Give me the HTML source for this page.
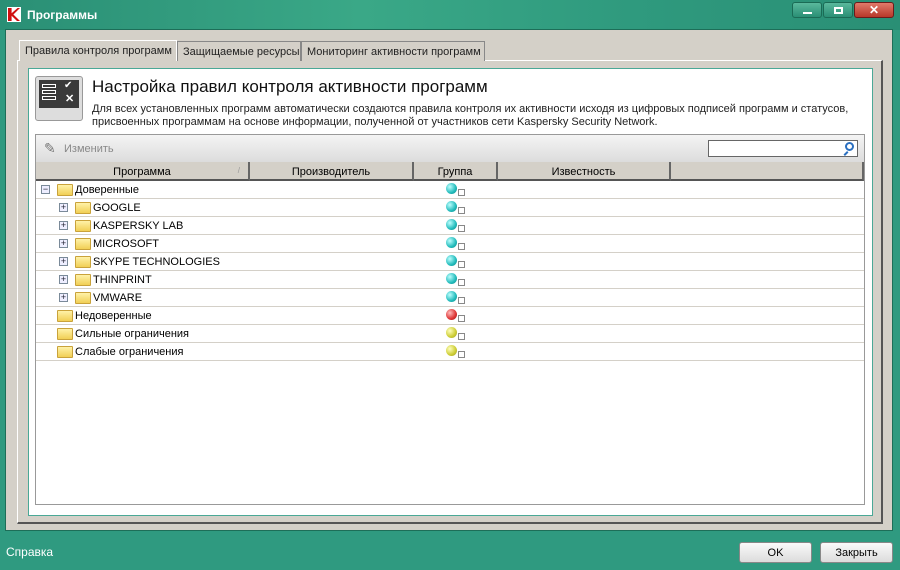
<html><head><style>
*{margin:0;padding:0;box-sizing:border-box}
body{width:900px;height:570px;overflow:hidden;background:#2f9a80;font-family:"Liberation Sans",sans-serif;font-size:11px;color:#000;position:relative}
.abs{position:absolute}
.title{left:0;top:0;width:900px;height:30px;background:linear-gradient(90deg,#2a8f75,#3aa887 40%,#2f9a7e 70%,#2a8f75)}
.client{left:5px;top:29px;width:888px;height:502px;background:#d4d0c8;border:1px solid #1d6e58}
.tab{top:41px;height:20px;border:1px solid #888;border-bottom:none;background:#d4d0c8;font-size:11px;padding:4px 5px 0;white-space:nowrap;color:#222}
.panel{left:17px;top:60px;width:866px;height:464px;border:1px solid #fff;border-right:2px solid #555;border-bottom:2px solid #555;background:#d4d0c8}
.inner{left:28px;top:68px;width:845px;height:448px;border:1px solid #4aa896;background:#fff}
.grid{left:35px;top:134px;width:830px;height:371px;border:1px solid #999;background:#fff}
.hd{position:absolute;top:162px;height:19px;background:#d4d0c8;border-right:2px solid #666;border-bottom:2px solid #555;text-align:center;padding-top:4px;font-size:11px}
.row{position:absolute;left:36px;width:828px;height:18px;border-bottom:1px solid #d4d0c8;font-size:11px}
.row span{position:absolute;top:3px}
.box{position:absolute;top:4px;width:9px;height:9px;border:1px solid #7a8a99;background:#eef;font-size:9px;line-height:7px;text-align:center;color:#223}
.fold{position:absolute;top:3px;width:16px;height:12px;background:linear-gradient(#fff2a8,#f1cf55);border:1px solid #c9a23a;border-radius:1px}
.ball{position:absolute;left:446px;top:2px;width:11px;height:11px;border-radius:50%}
.mini{position:absolute;left:458px;top:8px;width:7px;height:7px;border:1px solid #888;background:#fff}
.btn{top:542px;height:21px;border:1px solid #888;border-radius:3px;background:linear-gradient(#fafafa,#dcdcdc);text-align:center;padding-top:4px;font-size:11px}
</style></head><body>
<div class="abs title"></div>
<div class="abs" style="left:7px;top:7px;width:14px;height:15px;background:#fff"><div style="position:absolute;left:1px;top:1px;width:12px;height:13px;background:#d01010;clip-path:polygon(0 0,30% 0,30% 40%,80% 0,100% 0,45% 50%,100% 100%,75% 100%,30% 60%,30% 100%,0 100%)"></div></div>
<div class="abs" style="left:27px;top:8px;color:#fff;font-weight:bold;font-size:12px">Программы</div>
<div class="abs" style="left:792px;top:2px;width:30px;height:16px;border:1px solid #1b6b55;border-radius:3px;background:linear-gradient(#5ab89c,#2a8f75)"><div style="position:absolute;left:10px;top:9px;width:9px;height:2px;background:#fff"></div></div>
<div class="abs" style="left:823px;top:2px;width:30px;height:16px;border:1px solid #1b6b55;border-radius:3px;background:linear-gradient(#5ab89c,#2a8f75)"><div style="position:absolute;left:10px;top:4px;width:9px;height:7px;border:2px solid #fff"></div></div>
<div class="abs" style="left:854px;top:2px;width:40px;height:16px;border:1px solid #6b1b1b;border-radius:3px;background:linear-gradient(#e07a6a,#b8382a);color:#fff;font-weight:bold;text-align:center;font-size:12px;line-height:14px">✕</div>
<div class="abs client"></div>
<div class="abs panel"></div>
<div class="abs tab" style="left:19px;top:40px;height:21px;width:158px;background:#d4d0c8;border-color:#fff">Правила контроля программ</div>
<div class="abs tab" style="left:177px;width:124px">Защищаемые ресурсы</div>
<div class="abs tab" style="left:301px;width:184px">Мониторинг активности программ</div>
<div class="abs inner"></div>
<div class="abs" style="left:35px;top:76px;width:48px;height:45px;border:1px solid #999;border-radius:3px;background:#ddd"><div style="position:absolute;left:3px;top:3px;width:40px;height:28px;background:#3a3a3a"></div><div style="position:absolute;left:6px;top:7px;width:14px;height:4px;border:1px solid #fff"></div><div style="position:absolute;left:6px;top:13px;width:14px;height:4px;border:1px solid #fff"></div><div style="position:absolute;left:6px;top:19px;width:14px;height:4px;border:1px solid #fff"></div><div style="position:absolute;left:28px;top:3px;color:#fff;font-size:10px">✔</div><div style="position:absolute;left:29px;top:15px;color:#fff;font-size:11px;font-weight:bold">✕</div></div>
<div class="abs" style="left:92px;top:77px;font-size:17px;color:#111">Настройка правил контроля активности программ</div>
<div class="abs" style="left:92px;top:103px;font-size:11px;line-height:13px;color:#222">Для всех установленных программ автоматически создаются правила контроля их активности исходя из цифровых подписей программ и статусов,<br>присвоенных программам на основе информации, полученной от участников сети Kaspersky Security Network.</div>
<div class="abs grid"></div>
<div class="abs" style="left:36px;top:135px;width:828px;height:27px;background:linear-gradient(#f4f4f4,#dcdcdc)"></div>
<div class="abs" style="left:44px;top:140px;color:#777;font-size:14px">✎</div>
<div class="abs" style="left:64px;top:143px;color:#888;font-size:11px">Изменить</div>
<div class="abs" style="left:708px;top:140px;width:150px;height:17px;border:1px solid #666;background:#fff"><div style="position:absolute;right:3px;top:1px;width:9px;height:9px;border:2px solid #2a6fc0;border-radius:50%"></div><div style="position:absolute;right:10px;top:10px;width:2px;height:5px;background:#2a6fc0;transform:rotate(45deg)"></div></div>
<div class="hd" style="left:36px;width:214px">Программа<span style="position:absolute;right:8px;color:#999;font-size:8px;top:4px">/</span></div>
<div class="hd" style="left:250px;width:164px">Производитель</div>
<div class="hd" style="left:414px;width:84px">Группа</div>
<div class="hd" style="left:498px;width:173px">Известность</div>
<div class="hd" style="left:671px;width:193px"></div>

<div class="row" style="top:181px"><div class="box" style="left:5px">−</div><div class="fold" style="left:21px"></div><span style="left:39px">Доверенные</span><div class="ball" style="left:410px;background:radial-gradient(circle at 35% 35%,#bff,#2bb 60%,#188)"></div><div class="mini" style="left:422px"></div></div>
<div class="row" style="top:199px"><div class="box" style="left:23px">+</div><div class="fold" style="left:39px"></div><span style="left:57px">GOOGLE</span><div class="ball" style="left:410px;background:radial-gradient(circle at 35% 35%,#bff,#2bb 60%,#188)"></div><div class="mini" style="left:422px"></div></div>
<div class="row" style="top:217px"><div class="box" style="left:23px">+</div><div class="fold" style="left:39px"></div><span style="left:57px">KASPERSKY LAB</span><div class="ball" style="left:410px;background:radial-gradient(circle at 35% 35%,#bff,#2bb 60%,#188)"></div><div class="mini" style="left:422px"></div></div>
<div class="row" style="top:235px"><div class="box" style="left:23px">+</div><div class="fold" style="left:39px"></div><span style="left:57px">MICROSOFT</span><div class="ball" style="left:410px;background:radial-gradient(circle at 35% 35%,#bff,#2bb 60%,#188)"></div><div class="mini" style="left:422px"></div></div>
<div class="row" style="top:253px"><div class="box" style="left:23px">+</div><div class="fold" style="left:39px"></div><span style="left:57px">SKYPE TECHNOLOGIES</span><div class="ball" style="left:410px;background:radial-gradient(circle at 35% 35%,#bff,#2bb 60%,#188)"></div><div class="mini" style="left:422px"></div></div>
<div class="row" style="top:271px"><div class="box" style="left:23px">+</div><div class="fold" style="left:39px"></div><span style="left:57px">THINPRINT</span><div class="ball" style="left:410px;background:radial-gradient(circle at 35% 35%,#bff,#2bb 60%,#188)"></div><div class="mini" style="left:422px"></div></div>
<div class="row" style="top:289px"><div class="box" style="left:23px">+</div><div class="fold" style="left:39px"></div><span style="left:57px">VMWARE</span><div class="ball" style="left:410px;background:radial-gradient(circle at 35% 35%,#bff,#2bb 60%,#188)"></div><div class="mini" style="left:422px"></div></div>
<div class="row" style="top:307px"><div class="fold" style="left:21px"></div><span style="left:39px">Недоверенные</span><div class="ball" style="left:410px;background:radial-gradient(circle at 35% 35%,#fbb,#d33 60%,#922)"></div><div class="mini" style="left:422px"></div></div>
<div class="row" style="top:325px"><div class="fold" style="left:21px"></div><span style="left:39px">Сильные ограничения</span><div class="ball" style="left:410px;background:radial-gradient(circle at 35% 35%,#ffb,#cc3 60%,#993)"></div><div class="mini" style="left:422px"></div></div>
<div class="row" style="top:343px"><div class="fold" style="left:21px"></div><span style="left:39px">Слабые ограничения</span><div class="ball" style="left:410px;background:radial-gradient(circle at 35% 35%,#ffb,#cc3 60%,#993)"></div><div class="mini" style="left:422px"></div></div>

<div class="abs" style="left:6px;top:545px;color:#fff;font-size:12px">Справка</div>
<div class="abs btn" style="left:739px;width:73px">OK</div>
<div class="abs btn" style="left:820px;width:73px">Закрыть</div>
</body></html>
